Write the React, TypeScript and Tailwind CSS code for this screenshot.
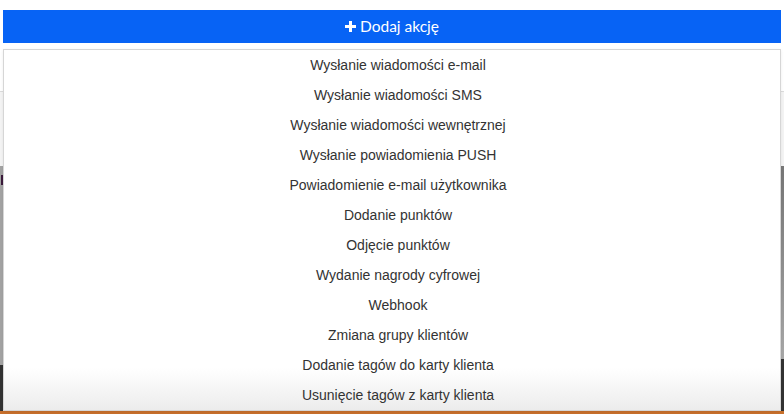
import React from "react";

const items = [
  "Wysłanie wiadomości e-mail",
  "Wysłanie wiadomości SMS",
  "Wysłanie wiadomości wewnętrznej",
  "Wysłanie powiadomienia PUSH",
  "Powiadomienie e-mail użytkownika",
  "Dodanie punktów",
  "Odjęcie punktów",
  "Wydanie nagrody cyfrowej",
  "Webhook",
  "Zmiana grupy klientów",
  "Dodanie tagów do karty klienta",
  "Usunięcie tagów z karty klienta",
];

export default function App() {
  return (
    <div className="relative w-[784px] h-[414px] overflow-hidden bg-white">
      {/* background page */}
      <div className="flex flex-col h-full">
        <div className="h-[92px] bg-white border-b border-[#dcdcdc]" />
        <div className="h-[74px] bg-[#f4f4f4]" />
        <div className="flex-1 flex justify-between bg-[#9a9a9a]">
          <div className="w-[3px] flex flex-col">
            <div className="flex-1 bg-[#a3a3a3] pt-[9px]">
              <div className="w-[2px] h-[10px] bg-[#3b1a3b] ml-[1px]" />
            </div>
            <div className="h-[46px] bg-[#333333]" />
          </div>
          <div className="w-[3px] flex flex-col">
            <div className="flex-1 bg-gradient-to-b from-[#777777] to-[#a8a8a8]" />
            <div className="h-[52px] bg-[#333333]" />
          </div>
        </div>
        <div className="h-[3px] bg-[#c8702c]" />
      </div>

      {/* button */}
      <div className="absolute left-[3px] right-[3px] top-[10px] h-[33px] bg-[#0763f5] flex items-center justify-center text-white text-[15.5px] font-['Lato',sans-serif]">
        <svg width="11" height="11" viewBox="0 0 11 11" className="mr-[4px] mt-[-1px]">
          <path d="M4 0h3v4h4v3H7v4H4V7H0V4h4z" fill="#fff" />
        </svg>
        <span>Dodaj akcję</span>
      </div>

      {/* dropdown */}
      <div className="absolute left-[3px] right-[3px] top-[49px] h-[362px] border border-[#d6d6d6] shadow-[0_1px_3px_rgba(0,0,0,0.08)] overflow-hidden bg-[linear-gradient(to_bottom,#ffffff_0px,#ffffff_318px,#ececec_360px)]">
        <ul className="flex flex-col pl-[12px]" style={{ fontFamily: "'Liberation Sans', Arial, sans-serif" }}>
          {items.map((t) => (
            <li key={t} className="h-[30px] flex items-center justify-center text-[14px] text-[#333333]">
              {t}
            </li>
          ))}
        </ul>
      </div>
    </div>
  );
}
